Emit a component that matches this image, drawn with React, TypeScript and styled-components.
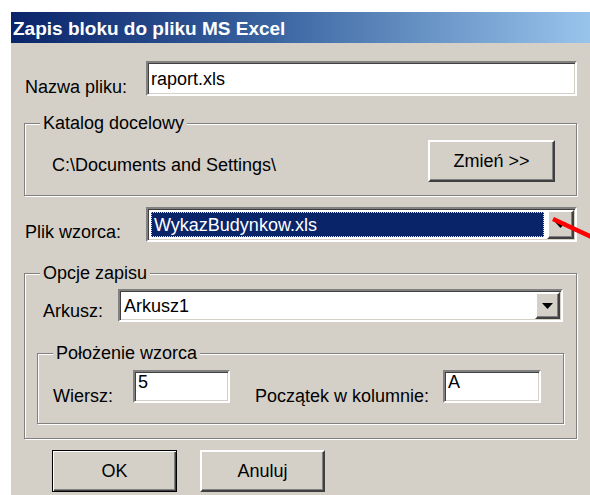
import React from "react";
import styled, { createGlobalStyle, css } from "styled-components";

const Global = createGlobalStyle`
  html, body {
    margin: 0;
    padding: 0;
    background: #ffffff;
    overflow: hidden;
  }
  body {
    font-family: "Liberation Sans", Arial, sans-serif;
    font-size: 18px;
    color: #000;
  }
`;

const sunken = css`
  box-sizing: border-box;
  border-style: solid;
  border-width: 2px;
  border-color: #808080 #ffffff #ffffff #808080;
  box-shadow: inset 1px 1px 0 #404040, inset -1px -1px 0 #d4d0c8;
  background: #ffffff;
`;

const raised = css`
  box-sizing: border-box;
  border-style: solid;
  border-width: 2px;
  border-color: #ffffff #404040 #404040 #ffffff;
  box-shadow: inset -1px -1px 0 #808080;
  background: #d4d0c8;
`;

const Page = styled.div`
  position: relative;
  width: 590px;
  height: 495px;
  padding: 12px 0 0 11px;
  box-sizing: border-box;
  overflow: hidden;
  display: flex;
`;

const Dialog = styled.div`
  flex: 1;
  background: #d4d0c8;
  display: flex;
  flex-direction: column;
`;

const TitleBar = styled.div`
  height: 31px;
  box-sizing: border-box;
  padding: 2px 0 0 2px;
  background: linear-gradient(90deg, #0a246a 0%, #3a64a0 45%, #98c4ec 100%);
  color: #ffffff;
  font-weight: bold;
  font-size: 19px;
  line-height: 29px;
  white-space: nowrap;
`;

const Content = styled.div`
  width: 553px;
  margin-left: 13px;
  display: flex;
  flex-direction: column;
`;

const Row = styled.div<{ $top?: number; $pl?: number; $pr?: number; $h: number }>`
  display: flex;
  align-items: flex-end;
  height: ${(p) => p.$h}px;
  margin-top: ${(p) => p.$top ?? 0}px;
  padding-left: ${(p) => p.$pl ?? 0}px;
  padding-right: ${(p) => p.$pr ?? 0}px;
`;

const Label = styled.span<{ $w?: number; $pl?: number; $lift?: number }>`
  flex: none;
  width: ${(p) => (p.$w ? `${p.$w}px` : "auto")};
  padding-left: ${(p) => p.$pl ?? 0}px;
  line-height: 21px;
  margin-bottom: ${(p) => -(p.$lift ?? 2)}px;
  white-space: nowrap;
`;

const TextField = styled.div<{ $w?: number; $pt?: number }>`
  ${sunken};
  flex: ${(p) => (p.$w ? "none" : "1")};
  width: ${(p) => (p.$w ? `${p.$w}px` : "auto")};
  height: 100%;
  padding: ${(p) => p.$pt ?? 0}px 0 0 3px;
  line-height: 21px;
  white-space: nowrap;
`;

const Combo = styled.div`
  ${sunken};
  flex: 1;
  height: 100%;
  display: flex;
  padding: 1px;
`;

const ComboValue = styled.div<{ $pt?: number }>`
  flex: 1;
  padding: ${(p) => p.$pt ?? 0}px 0 0 3px;
  line-height: 21px;
  white-space: nowrap;
`;

const SelectedValue = styled.div`
  flex: 1;
  margin: 2px 3px 2px 2px;
  background: #0a246a;
  border: 1px dotted #e6dc9a;
  color: #ffffff;
  padding: 2px 0 0 2px;
  line-height: 21px;
  white-space: nowrap;
`;

const DropButton = styled.div<{ $w: number }>`
  ${raised};
  flex: none;
  width: ${(p) => p.$w}px;
  display: flex;
  align-items: center;
  justify-content: center;
`;

const Group = styled.div<{ $top: number; $pad: string }>`
  position: relative;
  margin-top: ${(p) => p.$top}px;
  border: 1px solid #808080;
  box-shadow: 1px 1px 0 #ffffff, inset 1px 1px 0 #ffffff;
  padding: ${(p) => p.$pad};
  display: flex;
  flex-direction: column;
`;

/* caption sits on top of the etched frame line */
const GroupCaption = styled.span`
  position: absolute;
  top: -11px;
  left: 15px;
  padding: 0 3px;
  background: #d4d0c8;
  line-height: 20px;
  white-space: nowrap;
`;

const FolderRow = styled.div`
  display: flex;
  align-items: center;
  justify-content: space-between;
`;

const PathText = styled.span`
  padding-top: 8px;
  line-height: 21px;
  white-space: nowrap;
`;

const Button = styled.div<{ $w: number; $default?: boolean }>`
  box-sizing: border-box;
  width: ${(p) => p.$w}px;
  height: 42px;
  display: flex;
  align-items: center;
  justify-content: center;
  background: #d4d0c8;
  ${(p) =>
    p.$default
      ? css`
          border: 1px solid #000000;
          box-shadow: inset 1px 1px 0 #ffffff, inset -1px -1px 0 #404040,
            inset -2px -2px 0 #808080;
        `
      : raised};
`;

const ButtonBar = styled.div`
  display: flex;
  gap: 23px;
  margin-top: 11px;
  padding-left: 28px;
`;

/* red pointer line drawn over the dialog */
const Pointer = styled.svg`
  position: absolute;
  left: 0;
  top: 0;
  pointer-events: none;
`;

function Arrow() {
  return (
    <svg width="11" height="6" viewBox="0 0 11 6">
      <path d="M0 0 H11 L5.5 6 Z" fill="#000" />
    </svg>
  );
}

export default function App() {
  return (
    <Page>
      <Global />
      <Dialog>
        <TitleBar>Zapis bloku do pliku MS Excel</TitleBar>
        <Content>
          <Row $top={18} $h={35}>
            <Label $w={121} $pl={1}>Nazwa pliku:</Label>
            <TextField $pt={6}>raport.xls</TextField>
          </Row>

          <Group $top={27} $pad="16px 21px 13px 27px">
            <GroupCaption>Katalog docelowy</GroupCaption>
            <FolderRow>
              <PathText>C:\Documents and Settings\</PathText>
              <Button $w={127}>Zmień &gt;&gt;</Button>
            </FolderRow>
          </Group>

          <Row $top={11} $h={35}>
            <Label $w={121} $pl={1} $lift={1}>Plik wzorca:</Label>
            <Combo>
              <SelectedValue>WykazBudynkow.xls</SelectedValue>
              <DropButton $w={27}>
                <Arrow />
              </DropButton>
            </Combo>
          </Row>

          <Group $top={31} $pad="15px 12px 14px 12px">
            <GroupCaption>Opcje zapisu</GroupCaption>
            <Row $h={33} $pl={6} $pr={1}>
              <Label $w={75} $lift={0}>Arkusz:</Label>
              <Combo>
                <ComboValue $pt={4}>Arkusz1</ComboValue>
                <DropButton $w={25}>
                  <Arrow />
                </DropButton>
              </Combo>
            </Row>

            <Group $top={31} $pad="16px 0 20px 15px">
              <GroupCaption>Położenie wzorca</GroupCaption>
              <Row $h={33}>
                <Label $w={80} $lift={4}>Wiersz:</Label>
                <TextField $w={97}>5</TextField>
                <Label $w={188} $pl={25} $lift={4}>Początek w kolumnie:</Label>
                <TextField $w={98}>A</TextField>
              </Row>
            </Group>
          </Group>

          <ButtonBar>
            <Button $w={125} $default>
              OK
            </Button>
            <Button $w={125}>Anuluj</Button>
          </ButtonBar>
        </Content>
      </Dialog>
      <Pointer width="590" height="495">
        <line x1="553" y1="219" x2="600" y2="241" stroke="#ff0000" strokeWidth="4.5" />
      </Pointer>
    </Page>
  );
}
